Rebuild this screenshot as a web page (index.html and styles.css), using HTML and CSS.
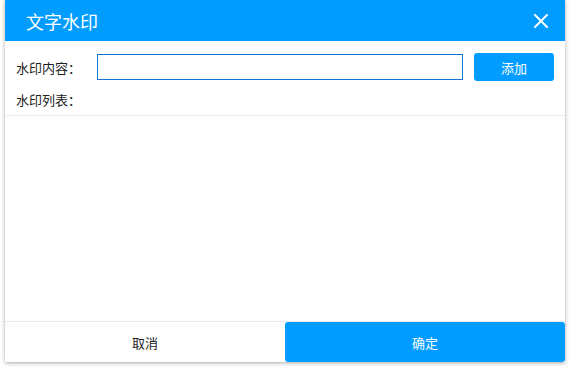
FILE: index.html
```html
<!DOCTYPE html>
<html lang="zh-CN">
<head>
  <meta charset="UTF-8" />
  <title>文字水印</title>
  <link rel="stylesheet" href="styles.css">
</head>
<body>
  <div class="dialog">
    <div class="dialog-header">
      <span class="dialog-title">文字水印</span>
      <span class="dialog-close">
        <svg width="14" height="14" viewBox="0 0 14 14"><path d="M1 1L13 13M13 1L1 13" stroke="#fff" stroke-width="2" stroke-linecap="round"/></svg>
      </span>
    </div>
    <div class="dialog-body">
      <div class="form-row">
        <label class="form-label">水印内容：</label>
        <input type="text" class="text-input" />
        <button class="add-button">添加</button>
      </div>
      <div class="list-row">
        <span class="form-label">水印列表：</span>
      </div>
      <div class="watermark-list"></div>
    </div>
    <div class="dialog-footer">
      <button class="cancel-button">取消</button>
      <button class="ok-button">确定</button>
    </div>
  </div>
</body>
</html>
```

FILE: styles.css
```css
* {
  margin: 0;
  padding: 0;
  box-sizing: border-box;
}

body {
  font-family: "Noto Sans CJK SC", "Noto Sans", sans-serif;
  background-color: #ffffff;
  color: #222;
  width: 570px;
  height: 372px;
  overflow: hidden;
}

.dialog {
  margin-left: 5px;
  width: 560px;
  height: 362px;
  background-color: #ffffff;
  display: flex;
  flex-direction: column;
  box-shadow: 0 1px 4px rgba(0, 0, 0, 0.35);
}

.dialog-header {
  height: 41px;
  background-color: #009cff;
  color: #ffffff;
  display: flex;
  align-items: center;
  justify-content: space-between;
  padding: 0 17px 0 21px;
}

.dialog-title {
  font-size: 18px;
}

.dialog-close {
  display: flex;
  cursor: pointer;
}

.dialog-body {
  flex: 1;
  display: flex;
  flex-direction: column;
  padding-top: 12px;
}

.form-row {
  display: flex;
  align-items: center;
  height: 28px;
  padding: 0 11px;
}

.form-label {
  font-size: 13px;
  width: 81px;
  color: #222;
}

.text-input {
  width: 366px;
  height: 26px;
  border: 1px solid #1577d2;
  outline: none;
  font-size: 13px;
  padding: 0 6px;
}

.add-button {
  margin-left: 11px;
  width: 80px;
  height: 28px;
  border: none;
  border-radius: 3px;
  background-color: #009cff;
  color: #ffffff;
  font-family: inherit;
  font-size: 13px;
  cursor: pointer;
}

.list-row {
  display: flex;
  align-items: center;
  height: 22px;
  margin-top: 7px;
  padding: 0 11px;
}

.watermark-list {
  flex: 1;
  margin-top: 5px;
  border-top: 1px solid #ececec;
}

.dialog-footer {
  display: flex;
  height: 41px;
  border-top: 1px solid #e8e8e8;
}

.dialog-footer button {
  flex: 1;
  border: none;
  font-family: inherit;
  font-size: 13px;
  cursor: pointer;
}

.cancel-button {
  background-color: #ffffff;
  color: #222;
}

.ok-button {
  background-color: #009cff;
  color: #ffffff;
  border-radius: 3px;
}
```
